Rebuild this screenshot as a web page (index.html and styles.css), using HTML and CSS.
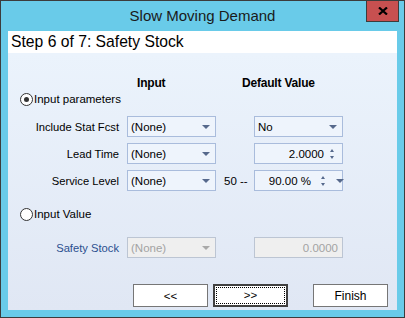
FILE: index.html
```html
<!DOCTYPE html>
<html lang="en">
<head>
<meta charset="UTF-8" />
<title>Slow Moving Demand</title>
<link rel="stylesheet" href="styles.css">
</head>
<body>

<div class="window">
  <div class="titlebar">
    <span></span>
    <span class="title">Slow Moving Demand</span>
    <div class="close">
      <svg width="10" height="8" viewBox="0 0 10 8"><path d="M1 0.5 L9 7.5 M9 0.5 L1 7.5" stroke="#000" stroke-width="2.2"/></svg>
    </div>
  </div>

  <div class="client">
    <div class="step">Step 6 of 7: Safety Stock</div>

    <div class="body">
      <div class="row heads">
        <span></span>
        <span class="head head-input">Input</span>
        <span></span>
        <span class="head head-default">Default Value</span>
      </div>

      <label class="radio first"><span class="dot checked"></span>Input parameters</label>

      <div class="row field">
        <span class="label">Include Stat Fcst</span>
        <div class="combo"><span>(None)</span><i class="arrow"></i></div>
        <span></span>
        <div class="combo"><span>No</span><i class="arrow"></i></div>
      </div>

      <div class="row field">
        <span class="label">Lead Time</span>
        <div class="combo"><span>(None)</span><i class="arrow"></i></div>
        <span></span>
        <div class="spin"><span class="num">2.0000</span><span class="updown"><i class="up"></i><i class="down"></i></span></div>
      </div>

      <div class="row field">
        <span class="label">Service Level</span>
        <div class="combo"><span>(None)</span><i class="arrow"></i></div>
        <span class="mid">50 --</span>
        <div class="spin pct"><span class="num">90.00 %</span><span class="updown"><i class="up"></i><i class="down"></i></span><i class="arrow"></i></div>
      </div>

      <label class="radio second"><span class="dot"></span>Input Value</label>

      <div class="row field disabled">
        <span class="label blue">Safety Stock</span>
        <div class="combo"><span>(None)</span><i class="arrow"></i></div>
        <span></span>
        <div class="spin"><span class="num">0.0000</span></div>
      </div>

      <div class="buttons">
        <button>&lt;&lt;</button>
        <button class="focus"><span>&gt;&gt;</span></button>
        <button class="finish">Finish</button>
      </div>
    </div>
  </div>
</div>

</body>
</html>
```

FILE: styles.css
```css
body {
  margin: 0;
  font-family: 'Liberation Sans', Arial, sans-serif;
  font-size: 11px;
  color: #000;
  background: #fff;
}
.window {
  width: 403px;
  height: 316px;
  border: 1px solid #3c3c3c;
  background: #69cbe9;
  display: flex;
  flex-direction: column;
}
.titlebar {
  height: 30px;
  display: grid;
  grid-template-columns: 1fr auto 1fr;
}
.title {
  font-size: 15px;
  line-height: 30px;
  color: #1a1a1a;
}
.close {
  justify-self: end;
  margin: -1px 5px 0 0;
  width: 31px;
  height: 20px;
  background: #c75050;
  border: 1px solid #3c3c3c;
  display: flex;
  align-items: center;
  justify-content: center;
}
.client {
  margin: 0 7px;
  height: 279px;
  display: flex;
  flex-direction: column;
}
.step {
  height: 22px;
  background: #fff;
  font-size: 15.7px;
  line-height: 22px;
  padding-left: 3px;
}
.body {
  flex: 1;
  background: linear-gradient(#ebf3fc, #e0e7f4);
}
.row {
  display: grid;
  grid-template-columns: 119px 89px 38px 89px;
  align-items: center;
}
.heads {
  margin-top: 23px;
  height: 14px;
}
.head {
  font-size: 12px;
  font-weight: bold;
  letter-spacing: -0.2px;
  line-height: 14px;
  white-space: nowrap;
}
.head-input {
  padding-left: 10px;
}
.head-default {
  margin-left: -12px;
}
.radio {
  display: flex;
  align-items: center;
  height: 16px;
  padding-left: 12px;
  font-size: 11.5px;
}
.radio.first {
  margin-top: 1px;
}
.radio.second {
  margin-top: 15px;
}
.dot {
  width: 11px;
  height: 11px;
  border: 1px solid #333;
  border-radius: 50%;
  background: #fff;
  margin-right: 1px;
  display: flex;
  align-items: center;
  justify-content: center;
}
.dot.checked::after {
  content: "";
  width: 5px;
  height: 5px;
  border-radius: 50%;
  background: #333;
}
.field {
  height: 21px;
  margin-top: 6px;
}
.radio.first + .field {
  margin-top: 9px;
}
.radio.second + .field {
  margin-top: 15px;
}
.label {
  text-align: right;
  padding-right: 8px;
  font-size: 11.2px;
}
.label.blue {
  color: #2a4f8f;
}
.combo, .spin {
  height: 21px;
  box-sizing: border-box;
  border: 1px solid #a9bcdc;
  background: #eef4fc;
  display: flex;
  align-items: center;
  padding: 0 5px 0 3px;
  font-size: 11.5px;
}
.combo span {
  flex: 1;
}
.arrow {
  width: 0;
  height: 0;
  border-left: 4px solid transparent;
  border-right: 4px solid transparent;
  border-top: 4px solid #56698c;
  margin-top: 1px;
}
.mid {
  padding-left: 8px;
  font-size: 11.5px;
}
.spin .num {
  flex: 1;
  text-align: right;
}
.updown {
  display: flex;
  flex-direction: column;
  gap: 4px;
  margin-left: 6px;
  margin-right: 3px;
}
.up, .down {
  width: 0;
  height: 0;
  border-left: 2px solid transparent;
  border-right: 2px solid transparent;
}
.up {
  border-bottom: 3px solid #56698c;
}
.down {
  border-top: 3px solid #56698c;
}
.spin.pct .num {
  flex: none;
  width: 53px;
}
.spin.pct .updown {
  margin-left: 10px;
  margin-right: 11px;
}
.disabled .combo, .disabled .spin {
  background: #efefef;
  border-color: #bcc5d3;
  color: #a3a3a3;
}
.disabled .arrow {
  border-top-color: #a9a9a9;
}
.disabled .spin {
  padding-right: 4px;
}
.buttons {
  display: flex;
  margin: 26px 0 0 125px;
  height: 23px;
}
.buttons button {
  width: 75px;
  height: 23px;
  box-sizing: border-box;
  background: #fff;
  border: 1px solid #767676;
  font-family: 'Liberation Sans', Arial, sans-serif;
  font-size: 11.5px;
  color: #000;
  padding: 0;
}
.buttons button.focus {
  margin-left: 5px;
  border: 2px solid #404040;
  padding: 1px;
}
.buttons button.focus span {
  display: block;
  height: 100%;
  box-sizing: border-box;
  border: 1px dotted #000;
  line-height: 15px;
}
.buttons button.finish {
  margin-left: 25px;
  font-size: 12px;
}
```
